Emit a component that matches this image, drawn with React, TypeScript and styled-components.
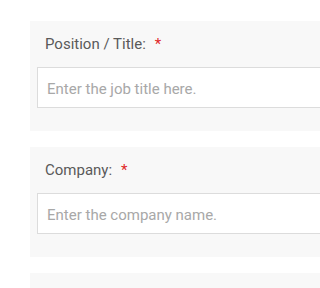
import React from "react";
import styled, { createGlobalStyle } from "styled-components";

const Global = createGlobalStyle`
  html, body { margin: 0; padding: 0; background: #ffffff; overflow: hidden; }
  body { font-family: Roboto, "Noto Sans", Arial, sans-serif; }
  * { box-sizing: border-box; }
`;

const Page = styled.div`
  display: flex;
  flex-direction: column;
  gap: 16px;
  padding: 21px 0 0 30px;
  width: 340px;
  height: 288px;
  overflow: hidden;
`;

const Panel = styled.div`
  background: #f8f8f8;
  padding: 13px 0 23px 7px;
  display: flex;
  flex-direction: column;
  gap: 13px;
  min-height: 110px;
  flex-shrink: 0;
`;

const Label = styled.label`
  display: block;
  padding-left: 8px;
  font-size: 15px;
  line-height: 20px;
  color: #5a5a5a;
`;

const Required = styled.span`
  color: #e02828;
  margin-left: 9px;
`;

const Input = styled.input`
  display: block;
  width: 100%;
  height: 41px;
  border: 1px solid #dcdcdc;
  background: #ffffff;
  padding: 2px 9px 0;
  font-family: Roboto, "Noto Sans", Arial, sans-serif;
  font-size: 15px;
  color: #555555;
  outline: none;
  &::placeholder { color: #a8a8a8; }
`;

const fields = [
  { label: "Position / Title:", placeholder: "Enter the job title here." },
  { label: "Company:", placeholder: "Enter the company name." },
];

export default function App() {
  return (
    <>
      <Global />
      <Page>
        {fields.map((f) => (
          <Panel key={f.label}>
            <Label>
              {f.label}
              <Required>*</Required>
            </Label>
            <Input placeholder={f.placeholder} />
          </Panel>
        ))}
        <Panel />
      </Page>
    </>
  );
}
